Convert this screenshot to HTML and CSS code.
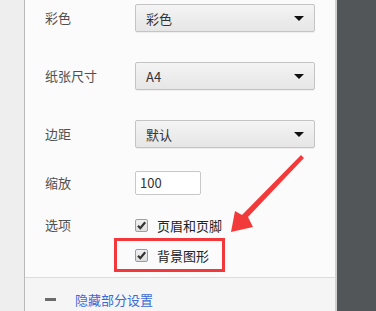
FILE: index.html
```html
<!DOCTYPE html>
<html lang="zh">
<head>
<meta charset="utf-8">
<link rel="stylesheet" href="styles.css">
</head>
<body>
<div class="app">
  <div class="side"></div>
  <div class="panel">
    <div class="settings">
      <div class="row r-select">
        <div class="label">彩色</div>
        <div class="select"><span>彩色</span><i class="caret"></i></div>
      </div>
      <div class="row r-select">
        <div class="label">纸张尺寸</div>
        <div class="select"><span>A4</span><i class="caret"></i></div>
      </div>
      <div class="row r-select">
        <div class="label">边距</div>
        <div class="select"><span>默认</span><i class="caret"></i></div>
      </div>
      <div class="row r-input">
        <div class="label">缩放</div>
        <div class="input">100</div>
      </div>
      <div class="row r-check">
        <div class="label">选项</div>
        <div class="check"><span class="box"><svg viewBox="0 0 13 13" width="13" height="13"><path d="M3 6.8 L5.3 9.2 L10.2 3.3" fill="none" stroke="#333" stroke-width="2.2"/></svg></span><span>页眉和页脚</span></div>
      </div>
      <div class="row r-check2">
        <div class="label"></div>
        <div class="check"><span class="box focus"><svg viewBox="0 0 13 13" width="13" height="13"><path d="M3 6.8 L5.3 9.2 L10.2 3.3" fill="none" stroke="#333" stroke-width="2.2"/></svg></span><span>背景图形</span></div>
      </div>
    </div>
    <div class="more">
      <span class="dash"></span>
      <span class="link">隐藏部分设置</span>
    </div>
  </div>
  <div class="gap"></div>
  <div class="preview"></div>
</div>
<div class="highlight"></div>
<svg class="arrow" width="376" height="311" viewBox="0 0 376 311">
  <polygon points="301,155 304,158 248,217 253,227 231,232 235,211 242,215" fill="#f23a3a"/>
</svg>
</body>
</html>
```
FILE: styles.css
```css
html, body {
  margin: 0;
  padding: 0;
  width: 376px;
  height: 311px;
  overflow: hidden;
  font-family: "Noto Sans CJK SC", "Liberation Sans", sans-serif;
  font-size: 13px;
}
.app {
  display: flex;
  height: 311px;
}
.side {
  width: 24px;
  background: #eeeeee;
  border-right: 1px solid #b9b9b9;
}
.panel {
  width: 310px;
  display: flex;
  flex-direction: column;
  background: #fbfbfb;
}
.settings {
  padding: 4px 20px 0 20px;
  height: 273px;
  border-bottom: 1px solid #dcdcdc;
}
.row {
  display: flex;
  align-items: center;
}
.label {
  width: 90px;
  color: #505050;
  line-height: 16px;
}
.r-select { height: 28px; margin-bottom: 30px; }
.r-select:nth-child(3) { margin-bottom: 23px; }
.select {
  box-sizing: border-box;
  width: 180px;
  height: 28px;
  border: 1px solid #c4c4c4;
  border-radius: 2px;
  background: linear-gradient(#f4f4f4, #e6e6e6);
  box-shadow: 0 1px 0 rgba(0,0,0,0.05);
  display: flex;
  align-items: center;
  justify-content: space-between;
  padding: 0 10px 0 10px;
  color: #333;
}
.caret {
  width: 0;
  height: 0;
  border-left: 5px solid transparent;
  border-right: 5px solid transparent;
  border-top: 5px solid #111;
  margin-top: 1px;
}
.r-input { height: 24px; margin-bottom: 20px; }
.input {
  box-sizing: border-box;
  width: 66px;
  height: 24px;
  border: 1px solid #c8c8c8;
  border-radius: 2px;
  background: #fff;
  padding-left: 4px;
  line-height: 22px;
  color: #333;
}
.r-check { height: 20px; margin-bottom: 10px; }
.r-check2 { height: 20px; }
.check {
  display: flex;
  align-items: center;
  color: #222;
}
.box {
  box-sizing: border-box;
  width: 13px;
  height: 13px;
  border: 1px solid #a0a0a0;
  border-radius: 2px;
  background: linear-gradient(#f0f0f0, #dedede);
  margin-right: 9px;
  display: flex;
  align-items: center;
  justify-content: center;
  overflow: hidden;
}
.box svg { flex: none; }
.box.focus {
  border-color: #7b9fd8;
}
.more {
  flex: 1;
  background: #f5f5f5;
  display: flex;
  align-items: center;
  padding: 10px 0 0 20px;
}
.dash {
  width: 11px;
  height: 3px;
  background: #6b6b6b;
  margin-right: 19px;
}
.link {
  color: #3a6ad4;
}
.gap {
  width: 2px;
  background: #d0d0d0;
}
.preview {
  flex: 1;
  background: #525659;
}
.highlight {
  position: absolute;
  left: 114px;
  top: 238px;
  width: 105px;
  height: 28px;
  border: 3px solid #f2383a;
}
.arrow {
  position: absolute;
  left: 0;
  top: 0;
}
```
